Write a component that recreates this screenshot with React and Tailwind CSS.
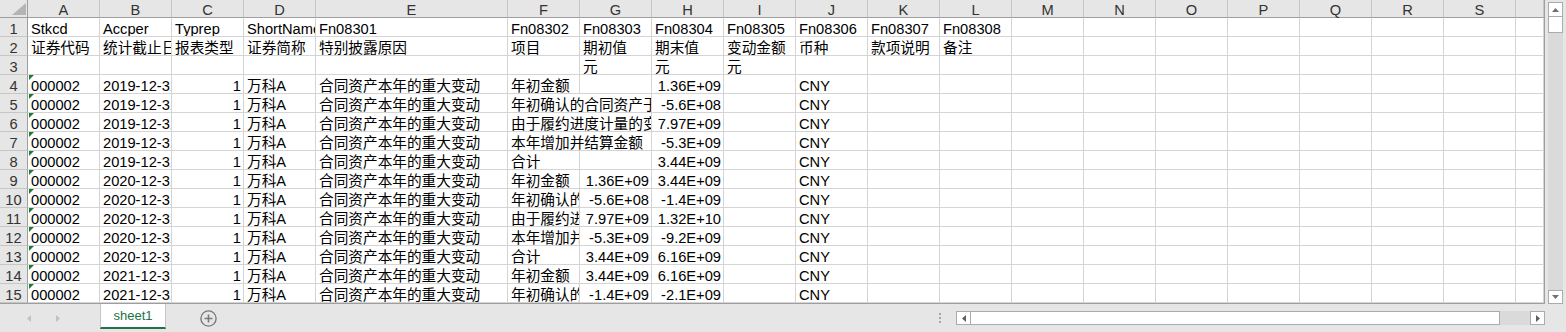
import React from 'react'

const letters = ['A', 'B', 'C', 'D', 'E', 'F', 'G', 'H', 'I', 'J', 'K', 'L', 'M', 'N', 'O', 'P', 'Q', 'R', 'S', '']

const top = [
  ['Stkcd', 'Accper', 'Typrep', 'ShortName', 'Fn08301', 'Fn08302', 'Fn08303', 'Fn08304', 'Fn08305', 'Fn08306', 'Fn08307', 'Fn08308'],
  ['证券代码', '统计截止日期', '报表类型', '证券简称', '特别披露原因', '项目', '期初值', '期末值', '变动金额', '币种', '款项说明', '备注'],
  ['', '', '', '', '', '', '元', '元', '元'],
]

// date, item, 期初值, 期末值
const data = [
  ['2019-12-31', '年初金额', '', '1.36E+09'],
  ['2019-12-31', '年初确认的合同资产于本年转入应收款项', '', '-5.6E+08'],
  ['2019-12-31', '由于履约进度计量的变动导致的调整', '', '7.97E+09'],
  ['2019-12-31', '本年增加并结算金额', '', '-5.3E+09'],
  ['2019-12-31', '合计', '', '3.44E+09'],
  ['2020-12-31', '年初金额', '1.36E+09', '3.44E+09'],
  ['2020-12-31', '年初确认的合同资产于本年转入应收款项', '-5.6E+08', '-1.4E+09'],
  ['2020-12-31', '由于履约进度计量的变动导致的调整', '7.97E+09', '1.32E+10'],
  ['2020-12-31', '本年增加并结算金额', '-5.3E+09', '-9.2E+09'],
  ['2020-12-31', '合计', '3.44E+09', '6.16E+09'],
  ['2021-12-31', '年初金额', '3.44E+09', '6.16E+09'],
  ['2021-12-31', '年初确认的合同资产于本年转入应收款项', '-1.4E+09', '-2.1E+09'],
]

const buildRows = () => {
  const rows = top.map((vals) => letters.map((_, i) => ({ v: vals[i] || '' })))
  data.forEach(([date, item, g, h]) => {
    const row = letters.map(() => ({ v: '' }))
    row[0] = { v: '000002', flag: true }
    row[1] = { v: date }
    row[2] = { v: '1', right: true }
    row[3] = { v: '万科A' }
    row[4] = { v: '合同资产本年的重大变动' }
    row[5] = { v: item, span: g === '' && item.length > 4 }
    row[6] = { v: g, right: true, skip: g === '' && item.length > 4 }
    row[7] = { v: h, right: true }
    row[9] = { v: 'CNY' }
    rows.push(row)
  })
  return rows
}

const Cell = ({ v, right, span, flag }) => (
  <div
    className={`relative overflow-hidden whitespace-nowrap border-r border-b border-[#d4d4d4] bg-white pt-[4px] leading-[14px] ${span ? 'col-span-2' : ''} ${right ? 'pr-[2px] text-right' : 'pl-[3px]'}`}
  >
    {flag && (
      <span className="absolute left-[1px] top-0 h-0 w-0 border-t-[5px] border-r-[5px] border-t-[#1e7b34] border-r-transparent" />
    )}
    {v}
  </div>
)

const SheetGrid = () => {
  const rows = buildRows()
  return (
    <div className="grid h-[304px] w-[1545px] grid-cols-[28px_repeat(4,72px)_192px_repeat(14,72px)_28px] grid-rows-[18px_repeat(15,19px)] border-r border-b border-[#9e9e9e] bg-white">
      <div className="relative border-r border-b border-[#9e9e9e] bg-[#e6e6e6]">
        <svg className="absolute right-[1px] bottom-[2px]" width="14" height="12" viewBox="0 0 14 12">
          <polygon points="14,0 14,12 0,12" fill="#b4b4b4" />
        </svg>
      </div>
      {letters.map((l, i) => (
        <div
          key={'h' + i}
          className="border-r border-b border-r-[#c6c6c6] border-b-[#9e9e9e] bg-[#e6e6e6] pt-[3px] text-center leading-[14px] text-[#333]"
        >
          {l}
        </div>
      ))}
      {rows.map((row, r) => (
        <React.Fragment key={'r' + r}>
          <div className="border-r border-b border-r-[#9e9e9e] border-b-[#c6c6c6] bg-[#e6e6e6] pt-[4px] text-center leading-[14px] text-[#333]">
            {r + 1}
          </div>
          {row.map((c, i) => (c.skip ? null : <Cell key={i} {...c} />))}
        </React.Fragment>
      ))}
    </div>
  )
}

const VScroll = () => (
  <div className="ml-[3px] mt-[2px] flex h-[302px] w-[15px] flex-col">
    <div className="flex h-[15px] items-center justify-center border border-[#ababab] bg-white">
      <svg width="7" height="4" viewBox="0 0 7 4"><polygon points="0,4 7,4 3.5,0" fill="#707070" /></svg>
    </div>
    <div className="h-[16px] border-x border-b border-[#ababab] bg-white" />
    <div className="flex-1 bg-[#dadada]" />
    <div className="flex h-[14px] items-center justify-center border border-[#ababab] bg-white">
      <svg width="7" height="4" viewBox="0 0 7 4"><polygon points="0,0 7,0 3.5,4" fill="#707070" /></svg>
    </div>
  </div>
)

const HScroll = () => (
  <div className="mt-[7px] flex h-[14px] w-[589px]">
    <div className="flex w-[15px] items-center justify-center border border-[#ababab] bg-white">
      <svg width="4" height="7" viewBox="0 0 4 7"><polygon points="4,0 4,7 0,3.5" fill="#606060" /></svg>
    </div>
    <div className="flex-1 border-y border-r border-[#ababab] bg-white" />
    <div className="w-[30px] bg-[#dadada]" />
    <div className="flex w-[15px] items-center justify-center border border-[#ababab] bg-white">
      <svg width="4" height="7" viewBox="0 0 4 7"><polygon points="0,0 0,7 4,3.5" fill="#606060" /></svg>
    </div>
  </div>
)

const SheetBar = () => (
  <div className="flex h-[28px] items-start">
    <div className="flex h-full w-[100px] items-center gap-[25px] pl-[27px]">
      <svg width="4" height="7" viewBox="0 0 4 7"><polygon points="4,0 4,7 0,3.5" fill="#c0c0c0" /></svg>
      <svg width="4" height="7" viewBox="0 0 4 7"><polygon points="0,0 0,7 4,3.5" fill="#c0c0c0" /></svg>
    </div>
    <div className="flex h-[25px] w-[66px] items-center justify-center border-x border-b-2 border-x-[#c6c6c6] border-b-[#217346] bg-white pt-[1px] text-[13px] text-[#217346]">
      sheet1
    </div>
    <div className="ml-[34px] self-center">
      <svg width="17" height="17" viewBox="0 0 17 17">
        <circle cx="8.5" cy="8.5" r="7.6" fill="none" stroke="#7a7a7a" strokeWidth="1.4" />
        <path d="M8.5 4.5v8M4.5 8.5h8" stroke="#7a7a7a" strokeWidth="1.6" />
      </svg>
    </div>
    <div className="flex-1" />
    <div className="mr-[15px] mt-[9px] flex flex-col gap-[2px]">
      <span className="h-[2px] w-[2px] bg-[#a6a6a6]" />
      <span className="h-[2px] w-[2px] bg-[#a6a6a6]" />
      <span className="h-[2px] w-[2px] bg-[#a6a6a6]" />
    </div>
    <HScroll />
    <div className="w-[21px]" />
  </div>
)

const App = () => {
  return (
    <div className="flex h-[332px] w-[1566px] flex-col overflow-hidden bg-[#e6e6e6] font-['Liberation_Sans','Noto_Sans_CJK_SC',sans-serif] text-[14.67px] text-black">
      <div className="flex h-[304px]">
        <SheetGrid />
        <VScroll />
      </div>
      <SheetBar />
    </div>
  )
}

export default App
